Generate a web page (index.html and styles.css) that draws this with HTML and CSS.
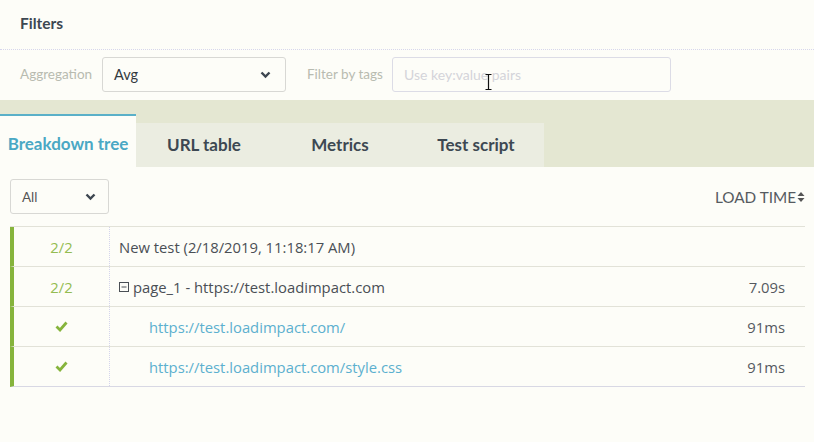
FILE: index.html
```html
<!DOCTYPE html>
<html>
<head>
<meta charset="utf-8">
<link rel="stylesheet" href="styles.css">
</head>
<body>
<div class="filters-head">Filters</div>
<div class="filter-row">
  <span class="flabel">Aggregation</span>
  <div class="select agg"><span>Avg</span>
    <svg class="chev" width="11" height="8" viewBox="0 0 11 8"><path d="M1.5 1.5 L5.5 5.5 L9.5 1.5" fill="none" stroke="#3d4650" stroke-width="2.4"/></svg>
  </div>
  <span class="flabel tags">Filter by tags</span>
  <div class="input"><span class="ph">Use key:value pairs</span>
    <svg class="ibeam" width="7" height="16" viewBox="0 0 7 16"><path d="M0.5 0.5 H6.5 M3.5 0.5 V15.5 M0.5 15.5 H6.5" fill="none" stroke="#111" stroke-width="1.2"/></svg>
  </div>
</div>
<div class="tabstrip">
  <div class="tab active">Breakdown tree</div>
  <div class="tab">URL table</div>
  <div class="tab">Metrics</div>
  <div class="tab">Test script</div>
</div>
<div class="content">
  <div class="toolbar">
    <div class="select all"><span>All</span>
      <svg class="chev" width="11" height="8" viewBox="0 0 11 8"><path d="M1.5 1.5 L5.5 5.5 L9.5 1.5" fill="none" stroke="#3d4650" stroke-width="2.4"/></svg>
    </div>
    <div class="sort">LOAD TIME<svg width="8" height="12" viewBox="0 0 8 12"><path d="M4 1 L7.5 5 H0.5 Z M4 11 L7.5 7 H0.5 Z" fill="#555"/></svg></div>
  </div>
  <div class="table">
    <div class="row">
      <div class="c1 frac">2/2</div>
      <div class="c2">New test (2/18/2019, 11:18:17 AM)</div>
      <div class="c3"></div>
    </div>
    <div class="row">
      <div class="c1 frac">2/2</div>
      <div class="c2"><svg class="minus" width="10" height="10" viewBox="0 0 10 10"><rect x="0.5" y="0.5" width="9" height="9" fill="none" stroke="#4a4f55"/><path d="M2.5 5 H7.5" stroke="#4a4f55"/></svg>page_1 - https://test.loadimpact.com</div>
      <div class="c3">7.09s</div>
    </div>
    <div class="row">
      <div class="c1"><svg width="13" height="11" viewBox="0 0 13 11"><path d="M1.5 5.5 L5 9 L11.5 1.5" fill="none" stroke="#86b43c" stroke-width="2.8"/></svg></div>
      <div class="c2 child"><a>https://test.loadimpact.com/</a></div>
      <div class="c3">91ms</div>
    </div>
    <div class="row">
      <div class="c1"><svg width="13" height="11" viewBox="0 0 13 11"><path d="M1.5 5.5 L5 9 L11.5 1.5" fill="none" stroke="#86b43c" stroke-width="2.8"/></svg></div>
      <div class="c2 child"><a>https://test.loadimpact.com/style.css</a></div>
      <div class="c3">91ms</div>
    </div>
  </div>
</div>
</body>
</html>
```
FILE: styles.css
```css
* { box-sizing: border-box; }
html, body { margin: 0; padding: 0; }
body {
  background: #fdfdf8;
  font-family: Lato, "Open Sans", sans-serif;
  color: #4a4f55;
  width: 814px;
  height: 442px;
  overflow: hidden;
}
.filters-head {
  height: 50px;
  padding: 14px 20px 0;
  font-weight: 700;
  font-size: 15.5px;
  color: #3d4852;
  border-bottom: 1px dotted #d6d6ec;
}
.filter-row {
  height: 50px;
  display: flex;
  align-items: flex-start;
  padding: 7px 20px 0;
}
.flabel {
  font-size: 13.5px;
  color: #b8bbb0;
  line-height: 35px;
  width: 82px;
}
.flabel.tags { margin-left: 21px; width: 85px; }
.select {
  height: 35px;
  border: 1px solid #d8d8d4;
  border-radius: 3px;
  display: flex;
  align-items: center;
  justify-content: space-between;
  font-size: 14.5px;
  color: #333a40;
  background: #fdfdf8;
}
.select.agg { width: 184px; padding: 0 14px 0 11px; }
.select.all { width: 99px; padding: 0 12px 0 11px; font-size: 13.5px; color: #555; }
.input {
  position: relative;
  width: 279px;
  height: 35px;
  border: 1px solid #dcdce6;
  border-radius: 3px;
  padding: 0 11px;
  display: flex;
  align-items: center;
  font-size: 14px;
}
.ph { color: #d4d4da; }
.ibeam { position: absolute; left: 92px; top: 16px; }
.tabstrip {
  height: 67px;
  background: #e4e7d2;
  display: flex;
  align-items: flex-end;
}
.tab {
  width: 136px;
  height: 44px;
  background: #ebede1;
  font-weight: 700;
  font-size: 17px;
  color: #3d4852;
  display: flex;
  align-items: center;
  justify-content: center;
  padding-bottom: 2px;
}
.tab.active {
  height: 53px;
  background: #fdfdf8;
  color: #4aa8c4;
  border-top: 2px solid #5ab0c8;
  padding-top: 6px;
}
.content { padding: 12px 9px 0 10px; }
.toolbar {
  display: flex;
  justify-content: space-between;
  align-items: center;
  height: 35px;
  margin-bottom: 12px;
}
.sort {
  font-size: 15.3px;
  color: #555a60;
  display: flex;
  align-items: center;
  gap: 1px;
}
.table { border-top: 1px solid #e2e2d8; }
.row {
  display: flex;
  height: 40px;
  border-left: 4px solid #86b43c;
  border-bottom: 1px solid #e2e2d8;
  font-family: "Open Sans", Lato, sans-serif;
  font-size: 14.8px;
  align-items: stretch;
}
.row:last-child { border-bottom-color: #d8d8e4; }
.c1 {
  width: 96px;
  border-right: 1px dotted #d4d4ec;
  display: flex;
  align-items: center;
  justify-content: center;
}
.frac { color: #94bc52; }
.c2 {
  flex: 1;
  padding-left: 9px;
  display: flex;
  align-items: center;
  color: #4a4f55;
}
.c2.child { padding-left: 39px; }
.c2 a { color: #5cb0cf; }
.minus { margin-right: 4px; }
.c3 {
  padding-right: 20px;
  display: flex;
  align-items: center;
  color: #55595f;
}
```
